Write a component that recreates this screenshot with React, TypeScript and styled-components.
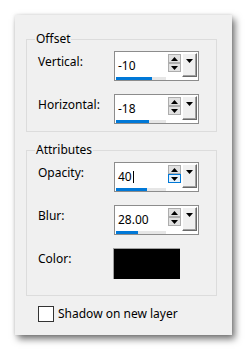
import React from "react";
import styled, { createGlobalStyle, css } from "styled-components";

const GlobalStyle = createGlobalStyle`
  html, body {
    margin: 0;
    padding: 0;
    background: #ffffff;
  }
  body {
    font-family: "Segoe UI", "Noto Sans", "Open Sans", sans-serif;
    font-size: 12px;
    color: #000;
  }
`;

const Page = styled.div`
  width: 248px;
  height: 351px;
  padding: 15px 0 0 15px;
  box-sizing: border-box;
`;

const Dialog = styled.div`
  width: 217px;
  height: 320px;
  box-sizing: border-box;
  padding-top: 16px;
  background: #f0f0f0;
  box-shadow: 3px 4px 7px rgba(0, 0, 0, 0.55), 0 0 3px rgba(0, 0, 0, 0.12);
  display: flex;
  flex-direction: column;
`;

const Group = styled.fieldset<{ $bottom: number }>`
  margin: 0 15px 10px 11px;
  padding: 4px 0 ${(p) => p.$bottom}px 11px;
  border: 1px solid #dcdcdc;
  display: flex;
  flex-direction: column;
  gap: 13px;
  min-width: 0;
`;

const Legend = styled.legend`
  margin-left: -3px;
  padding: 0 1px;
  line-height: 16px;
  font-size: 12px;
`;

const Row = styled.div`
  display: flex;
  align-items: flex-start;
`;

const Label = styled.div`
  width: 76px;
  padding-top: 3px;
  line-height: 16px;
`;

const Spinner = styled.div`
  width: 85px;
  height: 30px;
  box-sizing: border-box;
  border: 1px solid #8c8c8c;
  background: #fff;
  display: flex;
  align-items: flex-start;
`;

const Field = styled.div`
  width: 52px;
  height: 100%;
  display: flex;
  flex-direction: column;
`;

const Value = styled.div`
  padding: 6px 0 0 3px;
  line-height: 16px;
  display: flex;
  align-items: center;
`;

const Caret = styled.span`
  display: inline-block;
  width: 1px;
  height: 12px;
  margin-left: 1px;
  background: #000;
`;

const Track = styled.div`
  margin: auto 0 0 1px;
  width: 50px;
  height: 3px;
  background: #e6e6e6;
`;

const Fill = styled.div`
  height: 100%;
  background: #0078d7;
`;

const Steppers = styled.div`
  margin: 2px 0 0 1px;
  width: 13px;
  display: flex;
  flex-direction: column;
`;

const StepButton = styled.div<{ $hover?: boolean }>`
  height: 9px;
  box-sizing: border-box;
  border: 1px solid #adadad;
  background: #e1e1e1;
  display: flex;
  align-items: center;
  justify-content: center;
  ${(p) =>
    p.$hover &&
    css`
      border-color: #0078d7;
      background: #e5f1fb;
    `}
`;

const DropButton = styled.div`
  margin: 1px 0 0 1px;
  width: 15px;
  height: 24px;
  box-sizing: border-box;
  background: #f0f0f0;
  border-top: 1px solid #fff;
  border-left: 1px solid #fff;
  border-right: 1px solid #696969;
  border-bottom: 1px solid #696969;
  box-shadow: inset -1px -1px 0 #a0a0a0;
  display: flex;
  justify-content: center;
  padding-top: 5px;
`;

const Swatch = styled.div`
  margin-left: -1px;
  width: 67px;
  height: 31px;
  box-sizing: border-box;
  background: #000;
  border-top: 1px solid #a0a0a0;
  border-left: 1px solid #a0a0a0;
`;

const CheckRow = styled.label`
  display: flex;
  align-items: center;
  gap: 4px;
  margin-left: 23px;
  line-height: 16px;
`;

const CheckBox = styled.span`
  width: 16px;
  height: 16px;
  box-sizing: border-box;
  border: 1px solid #333;
  background: #fff;
`;

const Arrow = ({ up, w, h }: { up?: boolean; w: number; h: number }) => (
  <svg width={w} height={h} viewBox={`0 0 ${w} ${h}`}>
    <polygon
      points={up ? `0,${h} ${w / 2},0 ${w},${h}` : `0,0 ${w},0 ${w / 2},${h}`}
      fill="#000"
    />
  </svg>
);

type SpinProps = { value: string; bar: number; caret?: boolean; hoverDown?: boolean };

const SpinBox = ({ value, bar, caret, hoverDown }: SpinProps) => (
  <Spinner>
    <Field>
      <Value>
        {value}
        {caret && <Caret />}
      </Value>
      <Track>
        <Fill style={{ width: `${bar}px` }} />
      </Track>
    </Field>
    <Steppers>
      <StepButton>
        <Arrow up w={7} h={4} />
      </StepButton>
      <StepButton $hover={hoverDown}>
        <Arrow w={7} h={4} />
      </StepButton>
    </Steppers>
    <DropButton>
      <Arrow w={7} h={4} />
    </DropButton>
  </Spinner>
);

export default function App() {
  return (
    <Page>
      <GlobalStyle />
      <Dialog>
        <Group $bottom={7}>
          <Legend>Offset</Legend>
          <Row>
            <Label>Vertical:</Label>
            <SpinBox value="-10" bar={36} />
          </Row>
          <Row>
            <Label>Horizontal:</Label>
            <SpinBox value="-18" bar={33} />
          </Row>
        </Group>
        <Group $bottom={16}>
          <Legend>Attributes</Legend>
          <Row>
            <Label>Opacity:</Label>
            <SpinBox value="40" bar={31} caret hoverDown />
          </Row>
          <Row>
            <Label>Blur:</Label>
            <SpinBox value="28.00" bar={22} />
          </Row>
          <Row>
            <Label>Color:</Label>
            <Swatch />
          </Row>
        </Group>
        <CheckRow>
          <CheckBox />
          Shadow on new layer
        </CheckRow>
      </Dialog>
    </Page>
  );
}
